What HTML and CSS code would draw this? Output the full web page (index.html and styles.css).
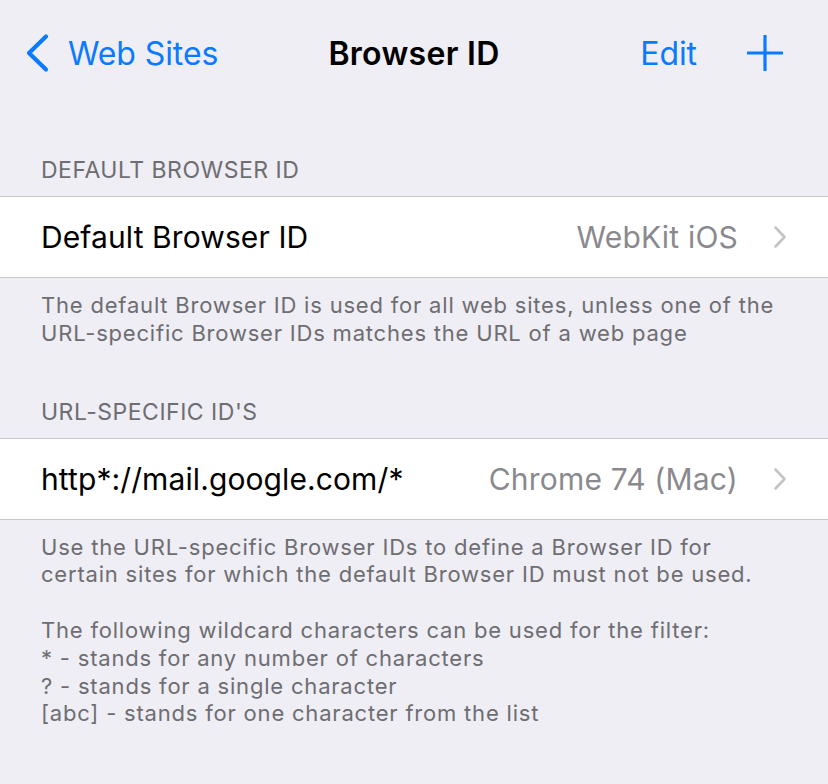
FILE: index.html
```html
<!DOCTYPE html>
<html lang="en">
<head>
<meta charset="utf-8">
<title>Browser ID</title>
<link rel="stylesheet" href="styles.css">
</head>
<body>
<div class="screen">
  <nav class="navbar">
    <div class="nav-left">
      <svg class="back-chevron" width="30" height="40" viewBox="0 0 30 40" aria-hidden="true">
        <path d="M22 3.5 L5 20 L22 36.5" fill="none" stroke="#0a7aff" stroke-width="4.2" stroke-linecap="round" stroke-linejoin="round"/>
      </svg>
      <span class="nav-link">Web Sites</span>
    </div>
    <h1 class="nav-title">Browser ID</h1>
    <div class="nav-right">
      <span class="nav-link">Edit</span>
      <svg class="plus" width="36" height="36" viewBox="0 0 36 36" aria-hidden="true">
        <path d="M18 1 V35 M1 18 H35" fill="none" stroke="#0a7aff" stroke-width="3.2" stroke-linecap="round"/>
      </svg>
    </div>
  </nav>

  <section class="group">
    <div class="group-header">DEFAULT BROWSER ID</div>
    <div class="cell">
      <span class="cell-label">Default Browser ID</span>
      <span class="cell-value">WebKit iOS</span>
      <svg class="disclosure" width="14" height="24" viewBox="0 0 14 24" aria-hidden="true">
        <path d="M2.5 2.5 L11.5 12 L2.5 21.5" fill="none" stroke="#c4c4c8" stroke-width="2.6" stroke-linecap="round" stroke-linejoin="round"/>
      </svg>
    </div>
    <div class="group-footer">The default Browser ID is used for all web sites, unless one of the URL-specific Browser IDs matches the URL of a web page</div>
  </section>

  <section class="group">
    <div class="group-header">URL-SPECIFIC ID'S</div>
    <div class="cell">
      <span class="cell-label">http*://mail.google.com/*</span>
      <span class="cell-value">Chrome 74 (Mac)</span>
      <svg class="disclosure" width="14" height="24" viewBox="0 0 14 24" aria-hidden="true">
        <path d="M2.5 2.5 L11.5 12 L2.5 21.5" fill="none" stroke="#c4c4c8" stroke-width="2.6" stroke-linecap="round" stroke-linejoin="round"/>
      </svg>
    </div>
    <div class="group-footer">Use the URL-specific Browser IDs to define a Browser ID for certain sites for which the default Browser ID must not be used.<br><br>The following wildcard characters can be used for the filter:<br>* - stands for any number of characters<br>? - stands for a single character<br>[abc] - stands for one character from the list</div>
  </section>
</div>
</body>
</html>
```

FILE: styles.css
```css
html, body {
  margin: 0;
  padding: 0;
  background: #efeef4;
}

body {
  font-family: "Inter", "Noto Sans", "Liberation Sans", sans-serif;
  color: #000;
  -webkit-font-smoothing: antialiased;
}

.screen {
  width: 828px;
  min-height: 784px;
}

.navbar {
  height: 106px;
  display: grid;
  grid-template-columns: 1fr auto 1fr;
  align-items: center;
  padding: 0 24px;
  box-sizing: border-box;
}

.nav-left {
  display: flex;
  align-items: center;
  gap: 14px;
}

.back-chevron {
  display: block;
}

.nav-link {
  color: #0a7aff;
  font-size: 32px;
  letter-spacing: -0.1px;
}

.nav-title {
  margin: 0;
  font-size: 32px;
  font-weight: 600;
  letter-spacing: 0.3px;
  color: #000;
}

.nav-right {
  display: flex;
  align-items: center;
  justify-content: flex-end;
  gap: 50px;
  padding-right: 21px;
}

.plus {
  display: block;
}

.group-header {
  padding: 50px 41px 12px;
  font-size: 23px;
  line-height: 28px;
  color: #6d6d72;
  letter-spacing: 0.5px;
}

.cell {
  display: flex;
  align-items: center;
  height: 80px;
  padding: 0 41px;
  background: #fff;
  border-top: 1px solid #c8c7cc;
  border-bottom: 1px solid #c8c7cc;
}

.cell-label {
  flex: 1;
  font-size: 30px;
  letter-spacing: 0.1px;
  white-space: nowrap;
}

.cell-value {
  font-size: 30px;
  color: #8a8a8e;
  letter-spacing: 0.2px;
  white-space: nowrap;
  margin-right: 35px;
}

.disclosure {
  display: block;
}

.group-footer {
  padding: 14px 41px 0;
  font-size: 22px;
  line-height: 27.8px;
  color: #6d6d72;
  letter-spacing: 0.8px;
}
```
